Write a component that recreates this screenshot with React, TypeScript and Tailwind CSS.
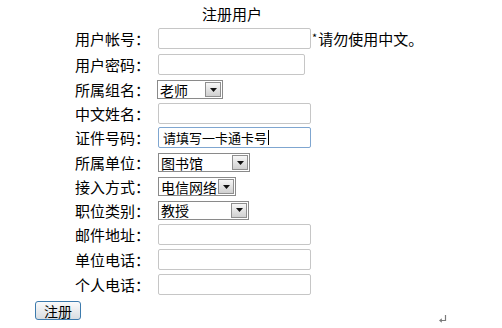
import React from "react";

const font = { fontFamily: '"Noto Sans CJK SC", "Noto Sans", sans-serif' };

function TextBox({ width = "w-[153px]", value, focused }: { width?: string; value?: string; focused?: boolean }) {
  return (
    <div
      className={`${width} h-[21px] rounded-[2px] border bg-white flex items-center pl-[4px] text-[13px] text-black ${
        focused ? "border-[#7fa6d0]" : "border-[#c6c6c6]"
      }`}
    >
      {value}
      {focused && <span className="ml-[1px] w-px h-[15px] bg-black" />}
    </div>
  );
}

function Dropdown({ width, value }: { width: string; value: string }) {
  return (
    <div className={`${width} h-[19px] border border-[#8a8a8a] bg-white flex items-center justify-between text-[14px] text-black`}>
      <span className="pl-[2px] leading-none whitespace-nowrap">{value}</span>
      <span className="shrink-0 mr-px w-[16px] h-[15px] border border-[#8f8f8f] bg-gradient-to-b from-[#f7f7f7] to-[#d0d0d0] flex items-center justify-center">
        <svg width="7" height="4" viewBox="0 0 7 4">
          <path d="M0 0H7L3.5 4Z" fill="#111" />
        </svg>
      </span>
    </div>
  );
}

const rows: { label: string; h: string; control: React.ReactNode; extra?: boolean }[] = [
  { label: "用户帐号：", h: "h-[25px]", control: <TextBox />, extra: true },
  { label: "用户密码：", h: "h-[26px]", control: <TextBox width="w-[147px]" /> },
  { label: "所属组名：", h: "h-[25px]", control: <div className="-ml-px"><Dropdown width="w-[66px]" value="老师" /></div> },
  { label: "中文姓名：", h: "h-[23px]", control: <TextBox /> },
  { label: "证件号码：", h: "h-[25px]", control: <TextBox value="请填写一卡通卡号" focused /> },
  { label: "所属单位：", h: "h-[25px]", control: <Dropdown width="w-[92px]" value="图书馆" /> },
  { label: "接入方式：", h: "h-[23px]", control: <Dropdown width="w-[78px]" value="电信网络" /> },
  { label: "职位类别：", h: "h-[24px]", control: <Dropdown width="w-[91px]" value="教授" /> },
  { label: "邮件地址：", h: "h-[25px]", control: <TextBox /> },
  { label: "单位电话：", h: "h-[25px]", control: <TextBox /> },
  { label: "个人电话：", h: "h-[25px]", control: <TextBox /> },
];

export default function App() {
  return (
    <div className="w-[502px] h-[328px] bg-white text-black overflow-hidden" style={font}>
      <div className="h-[26px] flex items-center pl-[202px] text-[15px] leading-none">注册用户</div>

      {rows.map((row) => (
        <div key={row.label} className={`${row.h} flex items-center`}>
          <div className="w-[150px] text-right text-[15px] leading-none">{row.label}</div>
          <div className="ml-[8px]">{row.control}</div>
          {row.extra && (
            <div className="ml-[1px] flex items-start text-[15px] leading-none whitespace-nowrap">
              <span className="text-[11px] leading-none mt-[1px] mr-px">*</span>
              请勿使用中文。
            </div>
          )}
        </div>
      ))}

      {/* Submit */}
      <div className="mt-[4px] flex items-start">
        <button className="ml-[35px] w-[46px] h-[19px] rounded-[3px] border border-[#3d7bad] bg-gradient-to-b from-[#fbfbfb] to-[#d8dde2] text-[14px] leading-none text-black flex items-center justify-center">
          注册
        </button>
        <svg className="ml-[358px] mt-[14px]" width="8" height="8" viewBox="0 0 8 8">
          <path d="M6.5 0V5.5H1.5" stroke="#7a7a7a" strokeWidth="1.2" fill="none" />
          <path d="M0 5.5L2.8 3.2V7.8Z" fill="#7a7a7a" />
        </svg>
      </div>
    </div>
  );
}
